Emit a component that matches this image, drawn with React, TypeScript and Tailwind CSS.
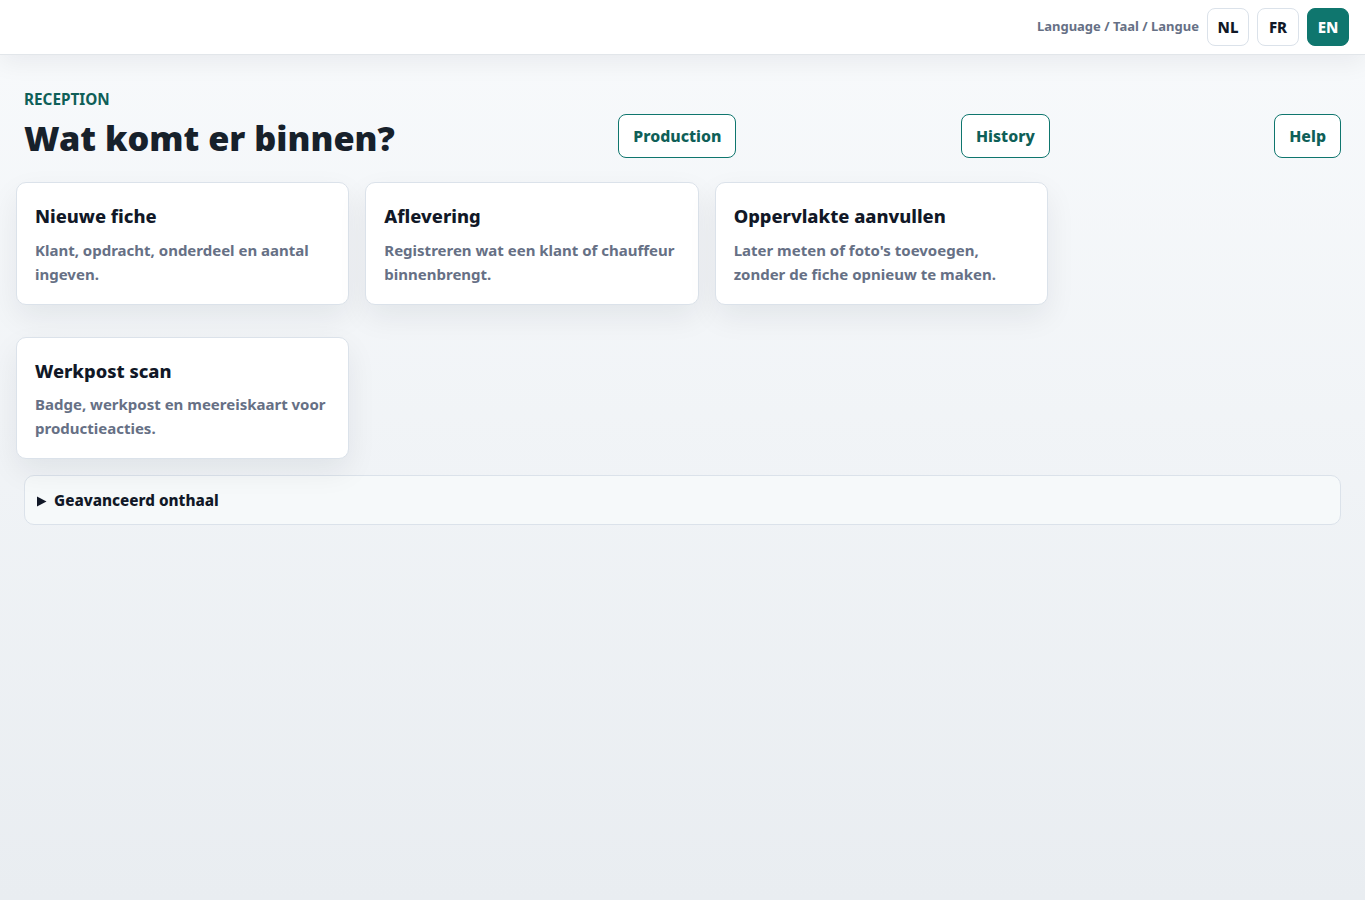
import React from 'react';

const cards = [
  { title: 'Nieuwe fiche', text: 'Klant, opdracht, onderdeel en aantal ingeven.' },
  { title: 'Aflevering', text: 'Registreren wat een klant of chauffeur binnenbrengt.' },
  { title: 'Oppervlakte aanvullen', text: "Later meten of foto's toevoegen, zonder de fiche opnieuw te maken." },
  { title: 'Werkpost scan', text: 'Badge, werkpost en meereiskaart voor productieacties.' },
];

function LinkButton({ label }: { label: string }) {
  return (
    <a className="flex h-[44px] items-center rounded-lg border border-[#0f766e] bg-white px-[14px] pt-px text-[15.85px] font-extrabold text-[#0f5f58]">
      {label}
    </a>
  );
}

function LangButton({ label, active }: { label: string; active?: boolean }) {
  return (
    <button
      className={
        active
          ? 'h-[38px] w-[42px] rounded-lg border border-[#0f766e] bg-[#0f766e] text-[15px] font-extrabold text-white'
          : 'h-[38px] w-[42px] rounded-lg border border-[#dbe2ea] bg-white text-[15px] font-extrabold text-[#111827]'
      }
    >
      {label}
    </button>
  );
}

export default function App() {
  return (
    <div className="min-h-[900px] bg-gradient-to-b from-[#f8fafc] to-[#e9edf1] font-['Noto_Sans',sans-serif]">
      <header className="flex h-[55px] items-center justify-end gap-2 border-b border-[#e2e6ea] bg-white px-4 shadow-[0_8px_24px_rgba(15,23,42,0.06)]">
        <span className="text-[13px] font-bold text-[#667085]">Language / Taal / Langue</span>
        <LangButton label="NL" />
        <LangButton label="FR" />
        <LangButton label="EN" active />
      </header>

      <main className="px-6 pt-[33px]">
        <div className="flex items-end justify-between">
          <div className="-mr-px">
            <p className="pt-px text-[15.3px] leading-[20px] font-bold text-[#0f5f58]">RECEPTION</p>
            <h1 className="mt-[9px] text-[34.25px] leading-[40px] font-black text-[#17212b]">Wat komt er binnen?</h1>
          </div>
          <LinkButton label="Production" />
          <LinkButton label="History" />
          <LinkButton label="Help" />
        </div>

        <div className="mt-[24px] -ml-2 grid w-[1032px] grid-cols-3 gap-x-4 gap-y-8">
          {cards.map((card) => (
            <div
              key={card.title}
              className="rounded-[10px] border border-[#dbe2ea] bg-white px-[18px] pt-[19px] pb-[17.8px] shadow-[0_12px_30px_rgba(15,23,42,0.07)]"
            >
              <h2 className="text-[18.3px] leading-[28px] font-extrabold text-[#111827]">{card.title}</h2>
              <p className="mt-[7.8px] text-[15px] leading-[24px] font-bold text-[#667085]">{card.text}</p>
            </div>
          ))}
        </div>

        <details className="mt-4 rounded-[10px] border border-[#dbe2ea] bg-[#f6f9fa]">
          <summary className="flex h-[48px] cursor-pointer items-center gap-[7px] pl-3 text-[15.25px] font-extrabold text-[#111827]">
            <svg width="10" height="11" viewBox="0 0 10 11" className="mt-[2px] fill-[#111827]">
              <path d="M0 0.5 L9.5 5.5 L0 10.5 Z" />
            </svg>
            Geavanceerd onthaal
          </summary>
        </details>
      </main>
    </div>
  );
}
